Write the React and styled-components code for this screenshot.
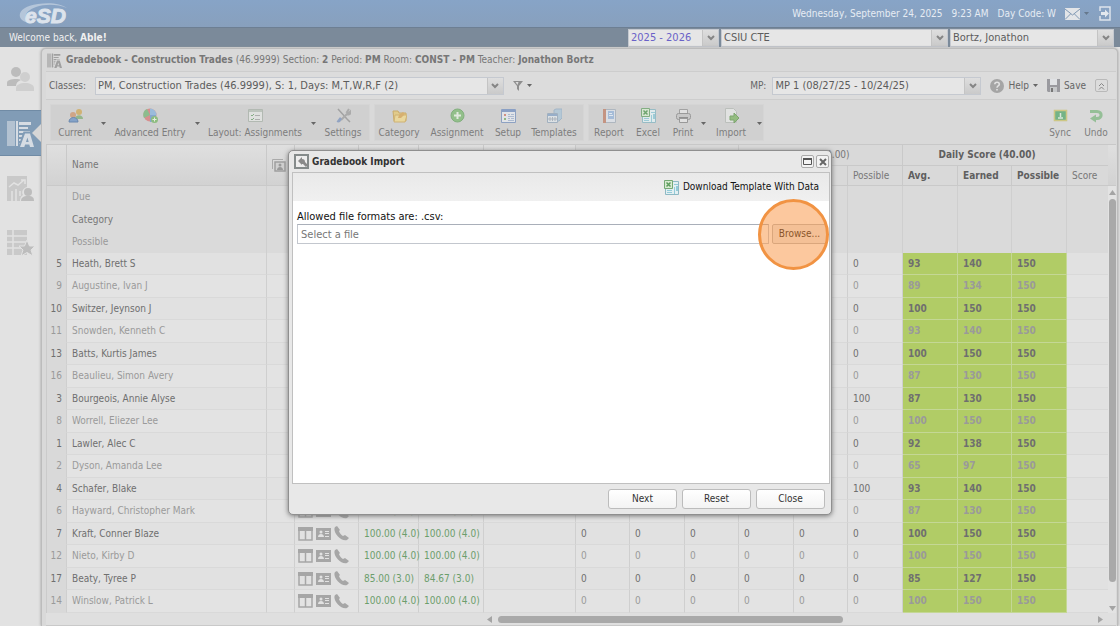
// NPM
import React, { useState } from 'react';
import styled, { createGlobalStyle, css } from 'styled-components';

// STYLES
const GlobalStyle = createGlobalStyle`
  * { box-sizing: border-box; }
  body {
    margin: 0;
    background: #e3e3e3;
    color: #666;
    font-family: 'DejaVu Sans Condensed', 'DejaVu Sans', Tahoma, sans-serif;
    font-size: 10px;
    line-height: 14px;
  }
  button, input, select { font: inherit; color: inherit; }
  svg { display: block; flex: none; }
`;

const Page = styled.div`
  position: relative;
  min-height: 100vh;
  display: flex;
  flex-direction: column;
  overflow: hidden;
`;

const TopBar = styled.header`
  display: flex;
  align-items: center;
  justify-content: space-between;
  height: 28px;
  padding: 0 9px 0 17px;
  background: linear-gradient(#87a4c7, #88a0bd);
  border-bottom: 1px solid #6d7f93;
  color: #e6ecf3;
`;

const TopInfo = styled.div`
  display: flex;
  align-items: center;
  gap: 9px;
`;

const IconButton = styled.button`
  display: flex;
  align-items: center;
  gap: 4px;
  padding: 0;
  border: 0;
  background: none;
  white-space: nowrap;
`;

const WelcomeBar = styled.div`
  display: flex;
  align-items: center;
  justify-content: space-between;
  height: 19px;
  padding: 0 6px 0 9px;
  background: #7b8a9a;
  color: #f0f0f0;
`;

const Pickers = styled.div`
  display: flex;
  gap: 2px;
`;

const SelectBox = styled.span`
  display: flex;
  align-items: center;
  width: ${props => props.$width};
  height: 18px;
  background: #e6e6e6;
  border: 1px solid #c5c9d0;
  color: #5c5c5c;
  font-size: 11px;
`;

const NativeSelect = styled.select`
  appearance: none;
  flex: 1;
  min-width: 0;
  height: 100%;
  padding: 0 2px;
  border: 0;
  background: transparent;
  color: ${props => props.$color || 'inherit'};
`;

const SelectArrow = styled.span`
  display: flex;
  align-items: center;
  justify-content: center;
  width: 16px;
  height: 100%;
  background: linear-gradient(#dedede, #cacaca);
  border-left: 1px solid #c4c4c4;
`;

const Body = styled.div`
  display: flex;
  flex: 1;
`;

const Sidebar = styled.nav`
  display: flex;
  flex-direction: column;
  width: 41px;
  padding-top: 1px;
  background: #e2e2e2;
`;

const SideLink = styled.a`
  display: flex;
  align-items: center;
  justify-content: flex-start;
  padding-left: 7px;
  position: relative;
  height: ${props => props.$height}px;

  ${props =>
    props.$active &&
    css`
      background: #819cb6;
      border-top: 1px solid #708ba5;
      border-bottom: 1px solid #708ba5;
      &::after {
        content: '';
        position: absolute;
        right: 0;
        border: 9px solid transparent;
        border-left: 0;
        border-right-color: #d6d6d6;
      }
    `};
`;

const Panel = styled.main`
  flex: 1;
  min-width: 0;
  margin: 1px 2px 0 0;
  padding: 0 1px 0 4px;
  background: #d9d9d9;
  border: 1px solid #bcbcbc;
  border-bottom: 0;
  border-radius: 5px 5px 0 0;
  box-shadow: 0 0 3px #999;
`;

const PanelTitle = styled.h1`
  display: flex;
  align-items: center;
  gap: 4px;
  height: 22px;
  margin: 0;
  padding-left: 1px;
  font-size: 10px;
  font-weight: normal;
  color: #777;
  white-space: pre;
`;

const FilterRow = styled.div`
  display: flex;
  align-items: center;
  height: 29px;
  padding: 0 8px 0 3px;
  border-top: 1px solid #cdcdcd;
  border-bottom: 1px solid #cdcdcd;
  background: #dcdcdc;
`;

const FilterSide = styled.div`
  display: flex;
  align-items: center;
  gap: ${props => props.$gap}px;
  margin-left: ${props => (props.$end ? 'auto' : 0)};
`;

const CollapseButton = styled(IconButton)`
  width: 13px;
  height: 13px;
  justify-content: center;
  border: 1px solid #b9b9b9;
  border-radius: 2px;
`;

const Toolbar = styled.div`
  display: flex;
  align-items: center;
  gap: 4px;
  height: 44px;
  padding: 0 1px 0 4px;
  background: #d9d9d9;
`;

const ToolGroup = styled.div`
  display: flex;
  height: 37px;
  background: ${props => (props.$plain ? 'transparent' : '#d0d0d0')};
  border: 1px solid ${props => (props.$plain ? 'transparent' : '#d5d5d5')};
  margin-left: ${props => (props.$plain ? 'auto' : 0)};
`;

const ToolButton = styled.button`
  display: flex;
  flex-direction: column;
  align-items: center;
  gap: 3px;
  width: ${props => props.$width}px;
  padding: 3px 0 0;
  border: 0;
  background: none;
  color: #7d7d7d;
  white-space: nowrap;

  svg {
    opacity: 0.85;
  }
`;

const ToolCaret = styled.button`
  display: flex;
  align-items: center;
  justify-content: center;
  width: 8px;
  padding: 2px 0 0;
  border: 0;
  background: none;
`;

const GridWrap = styled.div`
  display: flex;
  border-top: 1px solid #c8c8c8;
`;

const Grid = styled.table`
  flex: 1;
  min-width: 0;
  width: 100%;
  table-layout: fixed;
  border-collapse: separate;
  border-spacing: 0;
  border-left: 1px solid #cbcbcb;
`;

const Th = styled.th`
  height: ${props => (props.$group ? 21 : 20)}px;
  padding: 0 0 0 5px;
  border-right: 1px solid #c9c9c9;
  border-bottom: 1px solid #c9c9c9;
  background: ${props => (props.$tall ? 'linear-gradient(#dfdfdf, #d2d2d2)' : '#d9d9d9')};
  text-align: ${props => (props.$group ? 'center' : 'left')};
  font-weight: ${props => (props.$bold ? 'bold' : 'normal')};
  color: ${props => (props.$bold ? '#5f5f5f' : '#777')};
  overflow: hidden;
  white-space: nowrap;

  &:last-child {
    border-right: 0;
  }
`;

const Row = styled.tr`
  height: 22px;
  background: ${props => (props.$info ? '#dadada' : '#e1e1e1')};

  &:nth-child(even) {
    height: 23px;
    background: ${props => (props.$info ? '#dadada' : '#e3e3e3')};
    color: ${props => (props.$info ? '#777' : '#9a9a9a')};
  }
  &:nth-child(odd) {
    color: ${props => (props.$info ? '#999' : '#6f6f6f')};
  }
`;

const StudentBody = styled.tbody`
  td {
    border-bottom: 1px solid #d9d9d9;
  }
`;

const Td = styled.td`
  padding: 0 0 0 ${props => (props.$icons ? 3 : 5)}px;
  border-right: 1px solid #cfcfcf;
  white-space: nowrap;
  text-align: left;

  &:last-child {
    border-right: 0;
  }
  ${props =>
    props.$index &&
    css`
      padding: 0 4px 0 0;
      background: #d9d9d9;
      text-align: right;
    `};
  ${props => props.$grade && 'color: #6c9e6c;'}
  ${props =>
    props.$score &&
    css`
      background: #b1cc66;
      border-color: #c4d795 !important;
      font-weight: bold;
    `};
`;

const RowIcons = styled.span`
  display: flex;
  align-items: center;
  gap: 3px;
`;

const VScroll = styled.div`
  display: flex;
  flex-direction: column;
  width: 8px;
`;

const VScrollHead = styled.div`
  height: 41px;
  background: linear-gradient(#dfdfdf, #d2d2d2);
  border-bottom: 1px solid #c9c9c9;
`;

const VTrack = styled.div`
  display: flex;
  flex: 1;
  flex-direction: column;
  align-items: center;
  gap: 3px;
  padding: 3px 0 1px;
  background: #e3e3e3;

  svg:last-child {
    margin-top: auto;
  }
`;

const Thumb = styled.div`
  background: #a9a9a9;
  border-radius: 4px;
  ${props => (props.$vertical ? 'width: 7px; flex: 0 1 383px;' : 'height: 7px; flex: 0 1 345px;')}
`;

const HScroll = styled.div`
  display: flex;
  align-items: center;
  justify-content: flex-start;
  gap: 5px;
  height: 13px;
  padding: 0 12px 0 440px;
  background: #dfdfdf;
  border-bottom: 1px solid #c9c9c9;

  svg:last-child {
    margin-left: auto;
  }
`;

const Overlay = styled.div`
  position: absolute;
  inset: 0;
  display: flex;
  justify-content: center;
  align-items: flex-start;
  padding-top: 150px;
`;

const Dialog = styled.section`
  width: 544px;
  max-width: 96%;
  padding: 0 1px 0 3px;
  background: #e8e8e8;
  border: 1px solid #8f8f8f;
  border-radius: 5px;
  box-shadow: 0 1px 5px #777;
  color: #111;
`;

const DialogHead = styled.header`
  display: flex;
  align-items: center;
  gap: 2px;
  height: 21px;
  padding: 0 1px 0 2px;
`;

const DialogTitle = styled.h2`
  flex: 1;
  margin: 0;
  padding-left: 1px;
  font-size: 10px;
  color: #333;
`;

const WindowButton = styled.button`
  display: flex;
  align-items: center;
  justify-content: center;
  width: 13px;
  height: 13px;
  padding: 0;
  border: 1px solid #aaa;
  border-radius: 2px;
  background: #f3f3f3;
`;

const DialogContent = styled.div`
  min-height: 312px;
  background: #fff;
  border: 1px solid #c0c0c0;
`;

const DialogTools = styled.div`
  display: flex;
  justify-content: flex-end;
  height: 28px;
  padding-right: 10px;
  background: linear-gradient(#e9e9e9, #f0f0f0);
`;

const FileForm = styled.div`
  padding: 9px 2px 0 4px;
`;

const FileLabel = styled.label`
  display: block;
  font-size: 11px;
`;

const FileRow = styled.div`
  display: flex;
  gap: 3px;
`;

const FileInput = styled.input`
  flex: 1;
  min-width: 0;
  height: 20px;
  padding: 0 3px;
  border: 1px solid #c3c7ce;
  border-top-color: #a9afb9;
  background: #fff;
  font-size: 11px;
  &::placeholder {
    color: #777;
    opacity: 1;
  }
`;

const BrowseSlot = styled.div`
  position: relative;
  display: flex;
`;

const BrowseButton = styled.button`
  width: 55px;
  height: 20px;
  padding: 0;
  border: 1px solid #bbb;
  border-radius: 2px;
  background: #eee;
`;

const ClickMarker = styled.span`
  position: absolute;
  top: -25px;
  right: -2px;
  width: 71px;
  height: 71px;
  border: 3px solid #f19343;
  border-radius: 50%;
  background: rgba(250, 146, 62, 0.5);
  pointer-events: none;
`;

const DialogFooter = styled.footer`
  display: flex;
  justify-content: flex-end;
  gap: 5px;
  padding: 5px;
`;

const FooterButton = styled.button`
  width: 69px;
  height: 20px;
  padding: 0;
  border: 1px solid #bcbcbc;
  border-radius: 3px;
  background: linear-gradient(#fff, #f3f3f3);
  color: #333;
`;

// ICONS
const Caret = ({ color = '#666' }) => (
  <svg width="5" height="3" viewBox="0 0 5 3">
    <path d="M0 0h5L2.500 3z" fill={color} />
  </svg>
);

const Chevron = () => (
  <svg width="8" height="6" viewBox="0 0 8 6">
    <path d="M1 1l3 3 3-3" fill="none" stroke="#858585" strokeWidth="2" />
  </svg>
);

const ScrollArrow = ({ turn }) => (
  <svg width="7" height="7" viewBox="0 0 7 7">
    <path d="M0 6h7L3.500 1z" fill="#a4a4a4" transform={`rotate(${turn} 3.5 3.5)`} />
  </svg>
);

const Logo = () => (
  <svg width="60" height="26" viewBox="0 0 60 26" aria-label="eSD">
    <path
      d="M12 22C-2 19-1 6 21 3 34 1 44 3 50 7 40 3 28 3 19 6 8 10 6 16 12 22z"
      fill="#b5c6da"
    />
    <text
      x="8"
      y="22"
      fill="#dce3ec"
      stroke="#dce3ec"
      strokeWidth="1"
      fontFamily="Liberation Sans, Arial, sans-serif"
      fontSize="21"
      fontWeight="bold"
      fontStyle="italic"
    >
      eSD
    </text>
  </svg>
);

const MailIcon = () => (
  <svg width="15" height="12" viewBox="0 0 15 12">
    <path d="M0 0h15v12H0z" fill="#e3e5e8" />
    <path d="M0 1l7.500 6L15 1M0 11.500L5.500 6M15 11.500L9.500 6" fill="none" stroke="#7f97b3" />
  </svg>
);

const ExitIcon = () => (
  <svg width="13" height="15" viewBox="0 0 13 15">
    <path d="M2 5V1h10v13H2v-4" fill="none" stroke="#dde4ec" strokeWidth="1.500" />
    <path d="M3 6h4V3.500L11 7.500 7 11.500V9H3z" fill="#e3e8ee" />
  </svg>
);

const PeopleIcon = () => (
  <svg width="28" height="26" viewBox="0 0 28 26">
    <g fill="#bcbcbc">
      <circle cx="9" cy="6" r="5" />
      <path d="M0 20v-3c0-3 4-4 9-4 2 0 4 0 5 1-3 1-5 3-5 6z" />
    </g>
    <g fill="#cfcfcf">
      <circle cx="18" cy="11" r="5" />
      <path d="M9 25v-3c0-3 4-5 9-5s9 2 9 5v3z" />
    </g>
  </svg>
);

const GradebookIcon = ({ size = 27, color = '#d6dce3', back = '#819cb6' }) => (
  <svg width={size} height={size} viewBox="0 0 27 27">
    <path d="M0 1h8v25H0z" fill={color} opacity="0.6" />
    <path
      d="M9 1h2v25H9zM12 2h12v3H12zM12 7h9v2h-9zM12 11h11v2H12zM12 15h6v2h-6zM12 19h4v2h-4zM12 23h3v3h-3z"
      fill={color}
    />
    <path d="M16.500 11.500h8l4 16H11z" fill={back} />
    <path
      d="M18 13.500h5L27 27h-4l-.7-2.500h-4.200L17.300 27H13zM20.400 17.500L19 22h2.700z"
      fill={color}
      fillRule="evenodd"
    />
  </svg>
);

const ChartIcon = () => (
  <svg width="28" height="26" viewBox="0 0 28 26">
    <path d="M0 0h20v11c-4 1-6 5-4 8-2 1-3 3-3 6H0z" fill="#c9c9c9" />
    <path d="M2 11l5-4 4 2 6-5M14 4h4v4M5 15v10M9 13v12M13 15v5" fill="none" stroke="#e2e2e2" strokeWidth="1.500" />
    <circle cx="21" cy="16" r="4" fill="#bdbdbd" />
    <path d="M14 25c0-3 2-5 7-5s6 2 6 5z" fill="#bdbdbd" />
  </svg>
);

const ListStarIcon = () => (
  <svg width="28" height="26" viewBox="0 0 28 26">
    <path d="M0 0h20v25H0z" fill="#c9c9c9" />
    <path d="M0 6h20M0 12h20M0 18h20M6 0v25" stroke="#e2e2e2" strokeWidth="1.500" />
    <path
      d="M20 10l2.500 6H28l-4 4 2 6-6-3.500L14 26l2-6-4-4h5.500z"
      fill="#bdbdbd"
      stroke="#e2e2e2"
    />
  </svg>
);

const FilterIcon = () => (
  <svg width="10" height="10" viewBox="0 0 10 10">
    <path d="M0 0h10L6 5v5L4 8V5z" fill="#8e8e8e" />
    <path d="M2.500 1h3L4.500 4z" fill="#ddd" />
  </svg>
);

const HelpIcon = () => (
  <svg width="14" height="14" viewBox="0 0 14 14">
    <circle cx="7" cy="7" r="7" fill="#a5a5a5" />
    <path d="M4.800 5.300C4.800 2.500 9.300 2.500 9.300 5.200 9.300 7 7 6.800 7 8.700M7 10v1.600" fill="none" stroke="#e2e2e2" strokeWidth="1.600" />
  </svg>
);

const SaveIcon = () => (
  <svg width="13" height="13" viewBox="0 0 13 13">
    <path d="M0 0h13v13H1l-1-1z" fill="#9a9a9f" />
    <path d="M3 0h7v6H3z" fill="#e0e2e5" />
    <path d="M3 8h7v5H3z" fill="#c6c8ca" />
    <path d="M4 9h2v4H4z" fill="#777" />
  </svg>
);

const ExcelIcon = () => (
  <svg width="15" height="15" viewBox="0 0 15 15">
    <path d="M4.500 1.500h10v13h-13v-7" fill="#e3eff2" stroke="#8eb9c4" />
    <path d="M3 10h5v1H3zM3 12h5v1H3zM10 4h4v1h-4zM10 7h1v7h-1zM12 6h2v5h-2z" fill="#93cbd8" />
    <path d="M.5.5h8v8h-8z" fill="#d8ead1" stroke="#75a975" />
    <path d="M2.500 2.500l4 4M6.500 2.500l-4 4" stroke="#5d9c5d" strokeWidth="1.500" />
  </svg>
);

const toolArt = {
  users: (
    <>
      <circle cx="11" cy="4" r="3" fill="#d0ad63" />
      <path d="M7 11c0-5 8-5 8 0z" fill="#8ab280" />
      <circle cx="5" cy="7" r="3" fill="#cf9e7a" />
      <path d="M1 14c0-6 9-6 9 0z" fill="#799cc7" stroke="#5a7daa" />
    </>
  ),
  globe: (
    <>
      <circle cx="7" cy="7" r="6.500" fill="#d98484" />
      <path d="M7 .5a6.500 6.500 0 0 1 6.500 6.500H7z" fill="#91b8dd" />
      <path d="M7 7L1 10C-1 6 1 2 4 1z" fill="#82b982" />
      <path d="M7 7v7c3 0 6-2 6-7z" fill="#799fce" />
      <circle cx="11.500" cy="11.500" r="3.500" fill="#82ba72" />
      <path d="M11.500 9.500v4M9.500 11.500h4" stroke="#e8f0e3" />
    </>
  ),
  layout: (
    <>
      <path d="M.5 1.500h14v12H.5z" fill="#e2e4e2" stroke="#adb5ad" />
      <path d="M1 2h13v2H1z" fill="#b9c3b9" />
      <path d="M3 7l1 1 2-2M3 11l1 1 2-2" fill="none" stroke="#79a979" />
      <path d="M7 7.500h5M7 11.500h5" stroke="#a9a9a9" />
    </>
  ),
  tools: (
    <>
      <path d="M2 1l9 10M11 11l3 3" stroke="#9b9b9b" strokeWidth="1.500" />
      <path d="M13 1l-2 3 2 1 2-2c0 3-2 4-4 3L5 12" fill="none" stroke="#a5a5a5" strokeWidth="2" />
      <path d="M1 13l3-4 2 2-2 3c-2 1-4 0-3-1z" fill="#879cc0" />
    </>
  ),
  folder: (
    <>
      <path d="M1 3h5l1 2h7v8H2z" fill="#e5cb80" stroke="#c9a65b" />
      <path d="M3 7h12l-2 7H2z" fill="#eed995" stroke="#cfae65" />
      <path d="M6 10l1-3 4-3 2 2-4 4z" fill="#d9ab60" />
    </>
  ),
  add: (
    <>
      <circle cx="7.500" cy="7.500" r="6.500" fill="#88bd7e" stroke="#75aa70" />
      <path d="M7.500 4v7M4 7.500h7" stroke="#e5eee2" strokeWidth="2" />
    </>
  ),
  setup: (
    <>
      <path d="M.5 1.500h14v13H.5z" fill="#e5e8ed" stroke="#8299c0" />
      <path d="M1 1h13v3H1z" fill="#7e98c4" />
      <path d="M3 6h2v2H3z" fill="#d18675" />
      <path d="M3 10h2v2H3z" fill="#85b476" />
      <path d="M7 6.500h2M10 6.500h3M7 8.500h6M7 10.500h2M10 10.500h3M7 12.500h6" stroke="#a6b7d1" />
    </>
  ),
  templates: (
    <>
      <path d="M7 2l2-1h6v9l-3 3H7z" fill="#b0c7d8" stroke="#9bb2c6" />
      <path d="M.5 5.500h10v9H.5z" fill="#dfe4e8" stroke="#99abbd" />
      <path d="M1 6h9v2H1z" fill="#8ea9c8" />
      <path d="M3 9v4M5.500 9v4M8 9v4M1 11h9" stroke="#a5afb9" />
    </>
  ),
  report: (
    <>
      <path d="M1.500 1.500h12v13h-12z" fill="#dce1e8" stroke="#a9b2bd" />
      <path d="M1 1h3v14H1z" fill="#c38a75" />
      <path d="M6 3h6v8H6z" fill="#9eb9da" />
      <path d="M7 5.500h3M7 7.500h4" stroke="#e5edf5" />
    </>
  ),
  print: (
    <>
      <path d="M3.500 6V1.500h8V6" fill="#e3e3e3" stroke="#9b9b9b" />
      <rect x=".5" y="5.500" width="14" height="6" rx="2" fill="#c6c6c6" stroke="#909090" />
      <path d="M3 9h9v2H3z" fill="#858585" />
      <path d="M3.500 10.500h8v4h-8z" fill="#e3e3e3" stroke="#909090" />
    </>
  ),
  import: (
    <>
      <path d="M1.500.5h8l3 3v11h-11z" fill="#e4e6e4" stroke="#b8bdb8" />
      <path d="M6 8h4V5l5 5-5 5v-3H6z" fill="#8ab973" stroke="#71a060" />
    </>
  ),
  sync: (
    <>
      <path d="M1.500 2.500h12v10h-12z" fill="#62ad79" stroke="#cbc476" strokeWidth="1.500" />
      <path d="M7.500 5v4M5 10h5" stroke="#d9eadb" strokeWidth="1.500" />
    </>
  ),
  undo: (
    <>
      <path d="M1 3.500h7c5.500 0 5.500 7 0 7H6" fill="none" stroke="#8abb8c" strokeWidth="3" />
      <path d="M1 10.500l6-4v8z" fill="#8abb8c" />
    </>
  ),
};

const ToolIcon = ({ name }) =>
  name === 'excel' ? (
    <ExcelIcon />
  ) : (
    <svg width="15" height="15" viewBox="0 0 15 15">
      {toolArt[name]}
    </svg>
  );

const PhotoIcon = () => (
  <svg width="14" height="13" viewBox="0 0 14 13">
    <path d="M.5 10V.5H11" fill="none" stroke="#aaa" />
    <path d="M3 3h10v9H3z" fill="#d0d0d0" stroke="#9f9f9f" strokeWidth="1.500" />
    <circle cx="8" cy="6" r="1.500" fill="#999" />
    <path d="M5 11c0-4 6-4 6 0z" fill="#999" />
  </svg>
);

const ColumnsIcon = () => (
  <svg width="15" height="14" viewBox="0 0 15 14">
    <path d="M1 1h13v12H1zM7.500 3v10" fill="none" stroke="#a6a6a6" strokeWidth="1.500" />
    <path d="M0 0h15v4H0z" fill="#a6a6a6" />
  </svg>
);

const CardIcon = () => (
  <svg width="15" height="12" viewBox="0 0 15 12">
    <path d="M0 0h15v12H0z" fill="#a6a6a6" />
    <circle cx="5" cy="4" r="1.500" fill="#e2e2e2" />
    <path d="M2 9c0-4 6-4 6 0zM9 3h4v1H9zM9 5h4v1H9zM9 8h4v1H9z" fill="#e2e2e2" />
  </svg>
);

const PhoneIcon = () => (
  <svg width="15" height="15" viewBox="0 0 15 15">
    <path
      d="M3 0L1 1C-2 6 7 16 13 14l2-2-4-3-2 1C7 9 5 6 5 5l1-1z"
      fill="#a6a6a6"
    />
  </svg>
);

const ImportWindowIcon = () => (
  <svg width="15" height="15" viewBox="0 0 15 15">
    <path d="M1 1h13v13H1z" fill="#eee" stroke="#858b8b" strokeWidth="2" />
    <path d="M4 7l4-4v2c2 0 3 1 3 3l3 3-2 2-3-3H8v1z" fill="#8a8a8a" />
  </svg>
);

// DATA
const columns = [20, 200, 28, 64, 60, 65, 92, 54, 55, 54, 55, 54, 55, 55, 54, 55];

const toolGroups = [
  [
    ['Current', 'users', 48, true],
    ['Advanced Entry', 'globe', 86, true],
    ['Layout: Assignments', 'layout', 108, true],
    ['Settings', 'tools', 52],
  ],
  [
    ['Category', 'folder', 48],
    ['Assignment', 'add', 68],
    ['Setup', 'setup', 34],
    ['Templates', 'templates', 58],
  ],
  [
    ['Report', 'report', 40],
    ['Excel', 'excel', 38],
    ['Print', 'print', 32, true],
    ['Import', 'import', 48, true],
  ],
];

const students = [
  [5, 'Heath, Brett S', '93.00 (4.0)', '93.33 (4.0)', 0, 93, 140],
  [9, 'Augustine, Ivan J', '89.00 (3.0)', '89.33 (3.0)', 0, 89, 134],
  [10, 'Switzer, Jeynson J', '100.00 (4.0)', '100.00 (4.0)', 0, 100, 150],
  [11, 'Snowden, Kenneth C', '93.00 (4.0)', '93.33 (4.0)', 0, 93, 140],
  [13, 'Batts, Kurtis James', '100.00 (4.0)', '100.00 (4.0)', 0, 100, 150],
  [16, 'Beaulieu, Simon Avery', '87.00 (3.0)', '86.67 (3.0)', 0, 87, 130],
  [3, 'Bourgeois, Annie Alyse', '87.00 (3.0)', '86.67 (3.0)', 100, 87, 130],
  [8, 'Worrell, Eliezer Lee', '100.00 (4.0)', '100.00 (4.0)', 0, 100, 150],
  [1, 'Lawler, Alec C', '92.00 (4.0)', '92.00 (4.0)', 0, 92, 138],
  [2, 'Dyson, Amanda Lee', '65.00 (1.0)', '64.67 (1.0)', 0, 65, 97],
  [4, 'Schafer, Blake', '93.00 (4.0)', '93.33 (4.0)', 100, 93, 140],
  [6, 'Hayward, Christopher Mark', '87.00 (3.0)', '86.67 (3.0)', 0, 87, 130],
  [7, 'Kraft, Conner Blaze', '100.00 (4.0)', '100.00 (4.0)', 0, 100, 150],
  [12, 'Nieto, Kirby D', '100.00 (4.0)', '100.00 (4.0)', 0, 100, 150],
  [17, 'Beaty, Tyree P', '85.00 (3.0)', '84.67 (3.0)', 0, 85, 127],
  [14, 'Winslow, Patrick L', '100.00 (4.0)', '100.00 (4.0)', 0, 100, 150],
];

// COMPONENTS
const Picker = ({ label, value, width, color, id }) => (
  <SelectBox $width={width}>
    <NativeSelect id={id} aria-label={id ? undefined : label} $color={color}>
      <option>{value}</option>
    </NativeSelect>
    <SelectArrow>
      <Chevron />
    </SelectArrow>
  </SelectBox>
);

const Tool = ({ label, icon, width, menu }) => (
  <>
    <ToolButton type="button" $width={width}>
      <ToolIcon name={icon} />
      {label}
    </ToolButton>
    {menu && (
      <ToolCaret type="button" aria-label={`${label} menu`}>
        <Caret />
      </ToolCaret>
    )}
  </>
);

const GridHead = () => (
  <thead>
    <tr>
      <Th rowSpan={2} $tall />
      <Th rowSpan={2} $tall>Name</Th>
      <Th rowSpan={2} $tall><PhotoIcon /></Th>
      <Th rowSpan={2} $tall />
      <Th rowSpan={2} $tall />
      <Th rowSpan={2} $tall />
      <Th rowSpan={2} $tall />
      <Th colSpan={3} $group />
      <Th colSpan={3} $group>Test (60.00)</Th>
      <Th colSpan={3} $group $bold>Daily Score (40.00)</Th>
      <Th $group />
    </tr>
    <tr>
      <Th>Avg.</Th>
      <Th>Earned</Th>
      <Th>Possible</Th>
      <Th>Avg.</Th>
      <Th>Earned</Th>
      <Th>Possible</Th>
      <Th $bold>Avg.</Th>
      <Th $bold>Earned</Th>
      <Th $bold>Possible</Th>
      <Th>Score</Th>
    </tr>
  </thead>
);

const StudentRow = ({ student }) => {
  const [number, name, average, current, possible, avg, earned] = student;
  return (
    <Row>
      <Td $index>{number}</Td>
      <Td>{name}</Td>
      <Td />
      <Td $icons>
        <RowIcons>
          <ColumnsIcon />
          <CardIcon />
          <PhoneIcon />
        </RowIcons>
      </Td>
      <Td $grade>{average}</Td>
      <Td $grade>{current}</Td>
      <Td />
      {[0, 1, 2, 3, 4].map(i => (
        <Td key={i}>0</Td>
      ))}
      <Td>{possible}</Td>
      <Td $score>{avg}</Td>
      <Td $score>{earned}</Td>
      <Td $score>150</Td>
      <Td />
    </Row>
  );
};

const ImportDialog = ({ onClose }) => (
  <Overlay>
    <Dialog role="dialog" aria-labelledby="import-title">
      <DialogHead>
        <ImportWindowIcon />
        <DialogTitle id="import-title">Gradebook Import</DialogTitle>
        <WindowButton type="button" aria-label="Maximize">
          <svg width="9" height="7" viewBox="0 0 9 7">
            <path d="M.5 1h8v5.500h-8z" fill="none" stroke="#555" />
            <path d="M0 0h9v2H0z" fill="#555" />
          </svg>
        </WindowButton>
        <WindowButton type="button" aria-label="Close window" onClick={onClose}>
          <svg width="8" height="8" viewBox="0 0 8 8">
            <path d="M1 1l6 6M7 1L1 7" stroke="#666" strokeWidth="2" />
          </svg>
        </WindowButton>
      </DialogHead>
      <DialogContent>
        <DialogTools>
          <IconButton type="button">
            <ExcelIcon />
            Download Template With Data
          </IconButton>
        </DialogTools>
        <FileForm>
          <FileLabel htmlFor="import-file">Allowed file formats are: .csv:</FileLabel>
          <FileRow>
            <FileInput id="import-file" placeholder="Select a file" readOnly />
            <BrowseSlot>
              <BrowseButton type="button">Browse...</BrowseButton>
              <ClickMarker />
            </BrowseSlot>
          </FileRow>
        </FileForm>
      </DialogContent>
      <DialogFooter>
        <FooterButton type="button">Next</FooterButton>
        <FooterButton type="button">Reset</FooterButton>
        <FooterButton type="button" onClick={onClose}>Close</FooterButton>
      </DialogFooter>
    </Dialog>
  </Overlay>
);

export default function App() {
  const [open, setOpen] = useState(true);

  return (
    <Page>
      <GlobalStyle />
      <TopBar>
        <Logo />
        <TopInfo>
          <span>Wednesday, September 24, 2025</span>
          <span>9:23 AM</span>
          <span>Day Code: W</span>
          <IconButton type="button" aria-label="Messages">
            <MailIcon />
            <Caret color="#66788c" />
          </IconButton>
          <IconButton type="button" aria-label="Log out">
            <ExitIcon />
          </IconButton>
        </TopInfo>
      </TopBar>
      <WelcomeBar>
        <span>Welcome back, <b>Able!</b></span>
        <Pickers>
          <Picker label="School year" value="2025 - 2026" width="91px" color="#6a62c8" />
          <Picker label="School" value="CSIU CTE" width="227px" />
          <Picker label="Teacher" value="Bortz, Jonathon" width="164px" />
        </Pickers>
      </WelcomeBar>
      <Body>
        <Sidebar>
          <SideLink href="#students" aria-label="Students" $height={62}><PeopleIcon /></SideLink>
          <SideLink href="#gradebook" aria-label="Gradebook" $height={46} $active><GradebookIcon /></SideLink>
          <SideLink href="#reports" aria-label="Reports" $height={66}><ChartIcon /></SideLink>
          <SideLink href="#favorites" aria-label="Favorites" $height={42}><ListStarIcon /></SideLink>
        </Sidebar>
        <Panel>
          <PanelTitle>
            <GradebookIcon size={15} color="#a0a0a0" back="#d9d9d9" />
            <span>
              <b>Gradebook - Construction Trades</b> (46.9999) Section: <b>2</b> Period: <b>PM</b> Room:{' '}
              <b>CONST - PM</b> Teacher: <b>Jonathon Bortz</b>
            </span>
          </PanelTitle>
          <FilterRow>
            <FilterSide $gap={9}>
              <label htmlFor="classes">Classes:</label>
              <Picker id="classes" value="PM, Construction Trades (46.9999), S: 1, Days: M,T,W,R,F (2)" width="409px" />
              <IconButton type="button" aria-label="Filter">
                <FilterIcon />
                <Caret />
              </IconButton>
            </FilterSide>
            <FilterSide $gap={9} $end>
              <FilterSide $gap={6}>
                <label htmlFor="period">MP:</label>
                <Picker id="period" value="MP 1 (08/27/25 - 10/24/25)" width="209px" />
              </FilterSide>
              <IconButton type="button">
                <HelpIcon />
                Help
                <Caret />
              </IconButton>
              <IconButton type="button">
                <SaveIcon />
                Save
              </IconButton>
              <CollapseButton type="button" aria-label="Collapse">
                <svg width="7" height="8" viewBox="0 0 7 8">
                  <path d="M1 4l2.500-2.500L6 4M1 7.500L3.500 5 6 7.500" fill="none" stroke="#888" />
                </svg>
              </CollapseButton>
            </FilterSide>
          </FilterRow>
          <Toolbar>
            {toolGroups.map((group, i) => (
              <ToolGroup key={i}>
                {group.map(([label, icon, width, menu]) => (
                  <Tool key={label} label={label} icon={icon} width={width} menu={menu} />
                ))}
              </ToolGroup>
            ))}
            <ToolGroup $plain>
              <Tool label="Sync" icon="sync" width={36} />
              <Tool label="Undo" icon="undo" width={36} />
            </ToolGroup>
          </Toolbar>
          <GridWrap>
            <Grid>
              <colgroup>
                {columns.map((width, i) => (
                  <col key={i} width={width} />
                ))}
                <col />
              </colgroup>
              <GridHead />
              <tbody>
                {['Due', 'Category', 'Possible'].map(label => (
                  <Row key={label} $info>
                    <Td $index />
                    <Td>{label}</Td>
                    {columns.slice(1).map((_, i) => (
                      <Td key={i} />
                    ))}
                  </Row>
                ))}
              </tbody>
              <StudentBody>
                {students.map(student => (
                  <StudentRow key={student[0]} student={student} />
                ))}
              </StudentBody>
            </Grid>
            <VScroll>
              <VScrollHead />
              <VTrack>
                <ScrollArrow turn={0} />
                <Thumb $vertical />
                <ScrollArrow turn={180} />
              </VTrack>
            </VScroll>
          </GridWrap>
          <HScroll>
            <ScrollArrow turn={-90} />
            <Thumb />
            <ScrollArrow turn={90} />
          </HScroll>
        </Panel>
      </Body>
      {open && <ImportDialog onClose={() => setOpen(false)} />}
    </Page>
  );
}
